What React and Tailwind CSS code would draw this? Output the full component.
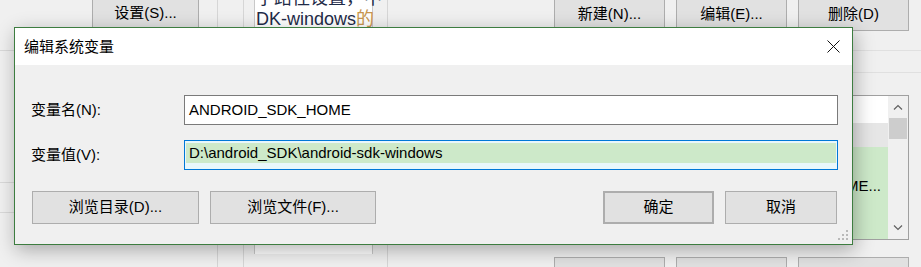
import React from 'react';

function Btn({ className = '', children }) {
  return (
    <div
      className={`flex shrink-0 items-center justify-center border border-[#adadad] bg-[#e1e1e1] text-[15px] text-black ${className}`}
    >
      {children}
    </div>
  );
}

function Chevron({ up }) {
  return (
    <svg width="10" height="6" viewBox="0 0 10 6">
      <path
        d={up ? 'M1 5.5 L5 1.5 L9 5.5' : 'M1 0.5 L5 4.5 L9 0.5'}
        fill="none"
        stroke="#606060"
        strokeWidth="1.2"
      />
    </svg>
  );
}

function Grip() {
  const dots = [
    [8, 0],
    [4, 4],
    [8, 4],
    [0, 8],
    [4, 8],
    [8, 8],
  ];
  return (
    <svg width="11" height="11" viewBox="0 0 11 11">
      {dots.map(([x, y], i) => (
        <rect key={i} x={x} y={y} width="2" height="2" fill="#b9b9b9" />
      ))}
    </svg>
  );
}

export default function App() {
  return (
    <div className="relative h-[267px] w-[921px] overflow-hidden bg-[#f0f0f0] font-['Liberation_Sans','Noto_Sans_CJK_SC',sans-serif] text-[15px] text-black">
      {/* window behind the dialog */}
      <div className="flex h-full">
        {/* left column */}
        <div className="flex w-[217px] shrink-0 flex-col">
          <Btn className="-mt-[2px] ml-[92px] h-[31px] w-[107px]">设置(S)...</Btn>
          <div className="mt-[21px] w-[40px] shrink-0 border-t border-[#d9d9d9]" />
          <div className="mt-[131px] w-[40px] shrink-0 border-t border-[#d9d9d9]" />
          <div className="mt-[29px] w-[40px] shrink-0 border-t border-[#d9d9d9]" />
        </div>

        {/* frame edges */}
        <div className="h-full w-[27px] shrink-0 border-x border-[#d6d6d6]" />

        {/* description panel */}
        <div className="h-full w-[144px] shrink-0 border-r border-[#d6d6d6] pl-[10px] pr-[14px]">
          <div className="h-full border-x border-[#c8c8c8] bg-white pl-[1px] text-[18px] leading-[22px] text-[#1f2b48]">
            <div className="-mt-[13px] whitespace-nowrap">字路径设置，中</div>
            <div className="-mt-[1px] whitespace-nowrap">
              DK-windows<span className="text-[#c8954e]">的</span>
            </div>
          </div>
        </div>

        {/* right column */}
        <div className="flex flex-1 flex-col pl-[166px]">
          <div className="-mt-[2px] flex h-[33px] shrink-0 gap-[11px]">
            <Btn className="h-full w-[111px]">新建(N)...</Btn>
            <Btn className="h-full w-[111px]">编辑(E)...</Btn>
            <Btn className="h-full w-[111px]">删除(D)</Btn>
          </div>
          <div className="-ml-[166px] mt-[19px] shrink-0 border-t border-[#e0e0e0]" />
          <div className="-ml-[166px] mt-[21px] shrink-0 border-t border-[#e0e0e0]" />

          {/* variables list */}
          <div className="mt-[22px] flex h-[145px] w-[355px] shrink-0 border border-[#a0a0a0] bg-white">
            <div className="flex flex-1 flex-col">
              <div className="h-[27px] bg-white" />
              <div className="h-[24px] bg-[#e6e6e6]" />
              <div className="flex-1 bg-[#cde9c9] pt-[29px] pr-[7px] leading-[20px]">
                <div className="overflow-hidden whitespace-nowrap text-right">ANDROID_SDK_HOME...</div>
              </div>
            </div>
            <div className="flex w-[20px] flex-col items-center bg-[#f0f0f0]">
              <div className="flex h-[22px] items-center justify-center">
                <Chevron up />
              </div>
              <div className="h-[21px] w-[18px] bg-[#cdcdcd]" />
              <div className="flex-1" />
              <div className="flex h-[22px] items-center justify-center">
                <Chevron />
              </div>
            </div>
          </div>

          <div className="mt-[17px] flex h-[33px] shrink-0 gap-[11px]">
            <Btn className="h-full w-[111px]" />
            <Btn className="h-full w-[111px]" />
            <Btn className="h-full w-[111px]" />
          </div>
        </div>
      </div>

      {/* dialog */}
      <div className="absolute left-[14px] top-[27px] flex h-[218px] w-[839px] flex-col border border-[#3d7d40] bg-[#f0f0f0] shadow-[2px_5px_18px_rgba(0,0,0,0.3)]">
        <div className="flex h-[37px] items-center justify-between bg-white pl-[9px]">
          <span className="pt-[2px]">编辑系统变量</span>
          <div className="flex h-full w-[38px] items-center justify-center">
            <svg width="13" height="13" viewBox="0 0 13 13">
              <path d="M0.5 0.5 L12.5 12.5 M12.5 0.5 L0.5 12.5" stroke="#111" strokeWidth="1" fill="none" />
            </svg>
          </div>
        </div>

        <div className="relative flex flex-1 flex-col pl-[16px] pr-[14px] pt-[30px]">
          <div className="flex h-[30px] items-center">
            <div className="w-[153px]">变量名(N):</div>
            <div className="flex h-full flex-1 items-center border border-[#7a7a7a] bg-white pl-[4px]">
              ANDROID_SDK_HOME
            </div>
          </div>
          <div className="mt-[15px] flex h-[30px] items-center">
            <div className="w-[153px]">变量值(V):</div>
            <div className="h-full flex-1 border border-[#0078d7] bg-[#e9f7fb] px-[1px] pt-[2px]">
              <div className="flex h-[20px] items-center bg-[#cde9c9] pl-[3px]">
                D:\android_SDK\android-sdk-windows
              </div>
            </div>
          </div>

          <div className="mt-[21px] flex h-[33px] items-stretch">
            <Btn className="ml-[1px] w-[167px]">浏览目录(D)...</Btn>
            <Btn className="ml-[11px] w-[166px]">浏览文件(F)...</Btn>
            <div className="flex-1" />
            <Btn className="w-[111px] border-2 border-[#0078d7]">确定</Btn>
            <Btn className="ml-[11px] mr-[1px] w-[112px]">取消</Btn>
          </div>

          <div className="absolute bottom-[3px] right-[3px]">
            <Grip />
          </div>
        </div>
      </div>
    </div>
  );
}
